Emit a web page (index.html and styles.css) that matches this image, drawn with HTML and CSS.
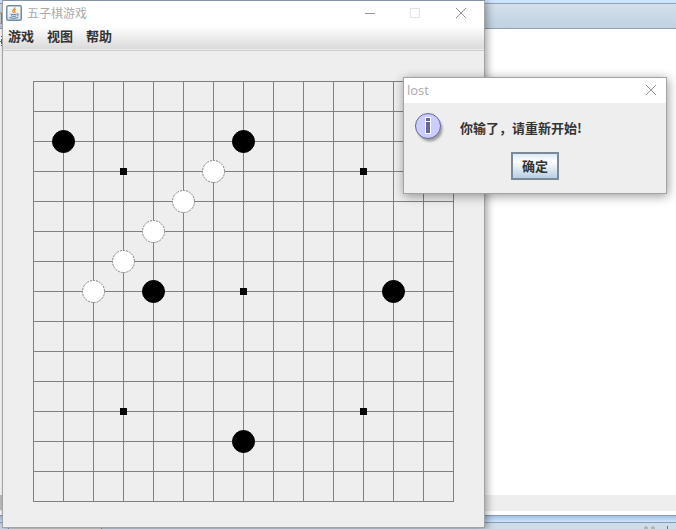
FILE: index.html
```
<!DOCTYPE html>
<html lang="zh-CN">
<head>
<meta charset="utf-8">
<title>五子棋游戏</title>
<link rel="stylesheet" href="styles.css">
</head>
<body>
<div class="desktop">
  <div class="workspace">
    <div class="strip"></div>
    <div class="toolbar"><svg width="2" height="20" viewBox="0 0 2 20" aria-hidden="true"><path d="M0 9h1.500v11H0" fill="none" stroke="#a08a50"/></svg></div>
    <div class="editor">
      <svg class="fragment" width="3" height="20" viewBox="0 0 3 20" aria-hidden="true"><path d="M2 6.500h1M1 7.500h1M0 12.500h3M1.500 10v5M1 16.500h1" fill="none" stroke="#3f7f63"/></svg>
    </div>
    <div class="scroll-track"><div class="scroll-thumb"></div></div>
    <div class="scroll-end"></div>
    <div class="divider"></div>
    <div class="panel-bar">
      <div class="tab"></div>
      <svg width="38" height="6" viewBox="0 0 38 6" aria-hidden="true"><path d="M6 5h4M13 5h4" stroke="#b5b5b5" stroke-width="2"/><path d="M7 3.500h2M14 3.500h2" stroke="#b5b5b5"/><path d="M29.500 3v3" stroke="#64748a"/></svg>
    </div>
  </div>

  <main class="window game">
    <header class="titlebar">
      <svg class="app-icon" width="16" height="16" viewBox="0 0 16 16" aria-hidden="true">
        <defs><linearGradient id="tile" x2="0" y2="1"><stop stop-color="#fff"/><stop offset="1" stop-color="#d9e2e9"/></linearGradient></defs>
        <rect x=".75" y=".75" width="14.500" height="14.500" rx="1.500" fill="url(#tile)" stroke="#6f8ea6" stroke-width="1.500"/>
        <path d="M8.700 2.200c1 1.600-2.300 2.200-2 3.800.1.700.9 1 .9 2M10 4.200C8 5.100 8.200 5.900 8.800 6.600c.4.500.2 1-.3 1.500" fill="none" stroke="#ed8b32" stroke-width="1.200"/>
        <path d="M4.500 9.100c1.700.7 4.700.6 6.200 0M5 10.900c1.600.6 3.900.6 5.200 0M3.300 12.600c2.200.9 7 .9 9-.2M11 8.900c2.300-.3 1.700 1.700 0 2" fill="none" stroke="#557fa5" stroke-width="1"/>
      </svg>
      <h1 class="title">五子棋游戏</h1>
      <div class="controls">
        <button class="control" aria-label="最小化"><svg width="12" height="12" viewBox="0 0 12 12"><path d="M0 6.500h10" stroke="#999"/></svg></button>
        <button class="control" aria-label="最大化" disabled><svg width="12" height="12" viewBox="0 0 12 12"><path d="M.5 1.500h9v9h-9z" fill="none" stroke="#e3e3e3"/></svg></button>
        <button class="control" aria-label="关闭"><svg width="12" height="12" viewBox="0 0 12 12"><path d="M1 1l10 10M11 1L1 11" stroke="#959595"/></svg></button>
      </div>
    </header>
    <nav class="menu">
      <button class="menu-item">游戏</button>
      <button class="menu-item">视图</button>
      <button class="menu-item">帮助</button>
    </nav>
    <div class="board-area">
      <svg class="board" viewBox="-12 -12 445 445" role="img" aria-label="棋盘">
        <path class="grid" d="M0 .5h421M0 30.500h421M0 60.500h421M0 90.500h421M0 120.500h421M0 150.500h421M0 180.500h421M0 210.500h421M0 240.500h421M0 270.500h421M0 300.500h421M0 330.500h421M0 360.500h421M0 390.500h421M0 420.500h421M.5 0v421M30.500 0v421M60.500 0v421M90.500 0v421M120.500 0v421M150.500 0v421M180.500 0v421M210.500 0v421M240.500 0v421M270.500 0v421M300.500 0v421M330.500 0v421M360.500 0v421M390.500 0v421M420.500 0v421"/>
        <path class="star" d="M87 87h7v7h-7zM327 87h7v7h-7zM207 207h7v7h-7zM87 327h7v7h-7zM327 327h7v7h-7z"/>
        <g class="black">
          <circle cx="30.500" cy="60.500" r="11"/>
          <circle cx="210.500" cy="60.500" r="11"/>
          <circle cx="120.500" cy="210.500" r="11"/>
          <circle cx="360.500" cy="210.500" r="11"/>
          <circle cx="210.500" cy="360.500" r="11"/>
        </g>
        <g class="white">
          <circle cx="180.500" cy="90.500" r="11"/>
          <circle cx="150.500" cy="120.500" r="11"/>
          <circle cx="120.500" cy="150.500" r="11"/>
          <circle cx="90.500" cy="180.500" r="11"/>
          <circle cx="60.500" cy="210.500" r="11"/>
        </g>
      </svg>
    </div>
  </main>

  <section class="window dialog" role="dialog" aria-labelledby="dialog-title">
    <header class="titlebar">
      <h2 class="title" id="dialog-title">lost</h2>
      <div class="controls">
        <button class="control" aria-label="关闭"><svg width="12" height="12" viewBox="0 0 12 12"><path d="M1 1l10 10M11 1L1 11" stroke="#959595"/></svg></button>
      </div>
    </header>
    <div class="message">
      <svg class="info" width="32" height="32" viewBox="0 0 32 32" aria-hidden="true">
        <defs><filter id="soft" x="-30%" y="-30%" width="160%" height="160%"><feGaussianBlur stdDeviation="1.300"/></filter></defs>
        <circle cx="16" cy="16" r="12.500" fill="#777" opacity=".65" filter="url(#soft)"/>
        <circle cx="14" cy="13" r="12.500" fill="#ccccff" stroke="#666699"/>
        <path d="M11 4h6v5h-6zM11 8h6v13h-6z" fill="#fff"/>
        <path d="M12 5h4v3h-4zM12 9h4v11h-4z" fill="#666699"/>
      </svg>
      <p class="text">你输了，请重新开始!</p>
    </div>
    <button class="confirm">确定</button>
  </section>
</div>
</body>
</html>
```
FILE: styles.css
```
* {
  box-sizing: border-box;
}

body {
  margin: 0;
  font-family: "Noto Sans CJK SC", sans-serif;
  font-size: 13px;
  color: #333;
}

button {
  padding: 0;
  border: 0;
  background: none;
  color: inherit;
  font: inherit;
}

.desktop {
  position: relative;
  min-height: 100vh;
  overflow: hidden;
  background: #fff;
}

.workspace {
  display: flex;
  flex-direction: column;
  height: 100vh;
}

.strip {
  height: 3px;
  background: #cee5ff;
}

.toolbar {
  height: 26px;
  border: solid #92a0b3;
  border-width: 1px 0;
  background: linear-gradient(#d3dfeb, #c1d2e2);
}

.toolbar svg {
  display: block;
}

.editor {
  flex: 1;
}

.fragment {
  display: block;
}

.scroll-track {
  height: 16px;
  background: #eee;
}

.scroll-thumb {
  width: 3px;
  height: 15px;
  background: #c4c4c4;
}

.scroll-end {
  height: 4px;
}

.divider {
  height: 8px;
  border: solid #8c9db0;
  border-width: 1px 0;
  background: linear-gradient(#a4c2e1, #cee5ff);
}

.panel-bar {
  display: flex;
  justify-content: space-between;
  height: 6px;
  background: #cfdce9;
}

.tab {
  width: 94px;
  margin-left: 8px;
  border: solid #8c9db0;
  border-width: 0 1px;
  background: #e0e0e0;
}

.window {
  position: absolute;
  display: flex;
  flex-direction: column;
  border: 1px solid #a3a3a3;
  background: #eee;
}

.game {
  top: 0;
  left: 2px;
  border-top-color: #8393a3;
  box-shadow: 2px 1px 8px rgb(0 0 0 / 38%);
}

.dialog {
  top: 77px;
  left: 403px;
  width: 264px;
  padding-bottom: 13px;
  box-shadow: 1px 2px 10px rgb(0 0 0 / 40%);
}

.titlebar {
  display: flex;
  align-items: center;
  height: 24px;
  padding: 0 3px;
  background: #fff;
}

.app-icon {
  margin-right: 5px;
}

.title {
  margin: 0;
  color: #aaa;
  font-size: 12px;
  font-weight: 400;
  line-height: 24px;
}

.dialog .title {
  font-family: "Open Sans", sans-serif;
  font-size: 13px;
}

.controls {
  display: flex;
  gap: 33px;
  margin-left: auto;
  padding-right: 14px;
}

.dialog .controls {
  padding-right: 6px;
}

.control {
  width: 12px;
  height: 12px;
}

.control svg {
  display: block;
}

.menu {
  display: flex;
  gap: 13px;
  height: 26px;
  padding: 0 5px 3px;
  border-bottom: 1px solid #ccc;
  background: linear-gradient(#fff 1px, #dadada 24px, #eee 24px);
}

.menu-item {
  font-weight: 700;
  line-height: 20px;
}

.board-area {
  padding: 18px 18px 13px;
}

.board {
  display: block;
  width: 445px;
  height: 445px;
}

.grid {
  fill: none;
  stroke: #808080;
  shape-rendering: crispEdges;
}

.star {
  fill: #000;
}

.black {
  fill: #000;
  stroke: #000;
}

.white {
  fill: #fff;
  stroke: #808080;
  stroke-dasharray: 2 1;
}

.message {
  display: flex;
  gap: 14px;
  padding: 10px 10px 0;
  border-top: 1px solid #fff;
}

.text {
  margin: 0;
  font-weight: 700;
  line-height: 30px;
}

.confirm {
  align-self: center;
  width: 48px;
  height: 28px;
  margin-top: 7px;
  border: 2px solid #7a8a99;
  background: linear-gradient(#dce7f2, #fff 30%, #b8cfe5);
  font-weight: 700;
  line-height: 24px;
}
```
